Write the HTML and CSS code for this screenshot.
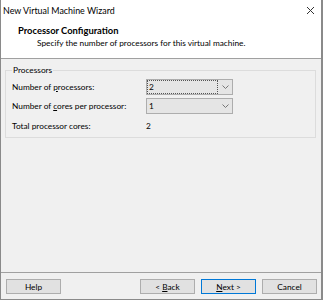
FILE: index.html
```html
<!DOCTYPE html>
<html lang="en">
<head>
  <meta charset="UTF-8" />
  <title>New Virtual Machine Wizard</title>
  <link rel="stylesheet" href="styles.css">
</head>
<body>

  <div class="window">

    <!-- Title bar -->
    <div class="titlebar">
      <span class="title">New Virtual Machine Wizard</span>
      <svg class="close" width="7" height="7" viewBox="0 0 7 7">
        <path d="M0 0 L7 7 M7 0 L0 7" stroke="#333" stroke-width="1" fill="none"/>
      </svg>
    </div>

    <!-- Page header -->
    <div class="header">
      <h1>Processor Configuration</h1>
      <p>Specify the number of processors for this virtual machine.</p>
    </div>

    <!-- Page content -->
    <div class="content">
      <fieldset class="group">
        <legend>Processors</legend>

        <div class="row">
          <span>Number of <u>p</u>rocessors:</span>
          <div class="combo">
            <span class="value focused">2</span>
            <svg class="arrow" width="7" height="4" viewBox="0 0 7 4">
              <path d="M0.5 0.5 L3.5 3.5 L6.5 0.5" stroke="#777" fill="none"/>
            </svg>
          </div>
        </div>

        <div class="row">
          <span>Number of <u>c</u>ores per processor:</span>
          <div class="combo">
            <span class="value">1</span>
            <svg class="arrow" width="7" height="4" viewBox="0 0 7 4">
              <path d="M0.5 0.5 L3.5 3.5 L6.5 0.5" stroke="#777" fill="none"/>
            </svg>
          </div>
        </div>

        <div class="row total">
          <span>Total processor cores:</span>
          <span class="count">2</span>
        </div>
      </fieldset>
    </div>

    <!-- Buttons -->
    <div class="footer">
      <button>Help</button>
      <div class="spacer"></div>
      <button>&lt; <u>B</u>ack</button>
      <button class="default"><u>N</u>ext &gt;</button>
      <button>Cancel</button>
    </div>

  </div>

</body>
</html>
```

FILE: styles.css
```css
/* General */
body {
  margin: 0;
  font-family: Lato, "Noto Sans", sans-serif;
  font-size: 8.3px;
  color: #000;
  background: #f0f0f0;
}

.window {
  width: 323px;
  height: 300px;
  box-sizing: border-box;
  display: flex;
  flex-direction: column;
  background: #f0f0f0;
  border-left: 1px solid #8a8a8a;
  border-right: 2px solid #8a8a8a;
  border-bottom: 1px solid #8a8a8a;
}

/* Title bar */
.titlebar {
  height: 21px;
  display: flex;
  align-items: center;
  justify-content: space-between;
  padding: 0 7px 0 2px;
  background: #fff;
}

.title {
  font-size: 8.9px;
}

/* Header */
.header {
  height: 38px;
  background: #fff;
  border-bottom: 1px solid #a0a0a0;
  box-sizing: border-box;
  padding: 4px 0 0 17px;
}

.header h1 {
  margin: 0;
  font-size: 9.4px;
  font-weight: bold;
  line-height: 12px;
}

.header p {
  margin: 0;
  padding-left: 19px;
  line-height: 12px;
}

/* Content */
.content {
  flex: 1;
  padding: 6px 5px 0 4px;
}

.group {
  margin: 0;
  padding: 2px 0 0 6px;
  height: 73px;
  box-sizing: border-box;
  border: 1px solid #dcdcdc;
}

.group legend {
  padding: 0 1px;
  line-height: 10px;
}

.row {
  display: grid;
  grid-template-columns: 134px 87px;
  align-items: center;
  height: 19px;
}

.row.total {
  height: 22px;
}

.combo {
  height: 16px;
  box-sizing: border-box;
  border: 1px solid #adadad;
  background: #e5e5e5;
  display: flex;
  align-items: center;
  padding: 0 3px 0 0;
}

.combo .value {
  flex: 1;
  line-height: 12px;
  padding-left: 1px;
  border: 1px solid transparent;
  margin-right: 4px;
}

.combo .value.focused {
  border: 1px dotted #555;
}

/* Footer */
.footer {
  height: 27px;
  box-sizing: border-box;
  border-top: 1px solid #a0a0a0;
  display: flex;
  align-items: flex-start;
  padding: 6px 4px 0 5px;
  gap: 6px;
}

.spacer {
  flex: 1;
}

button {
  width: 55px;
  height: 15px;
  padding: 0;
  font-family: inherit;
  font-size: 8.3px;
  line-height: 12px;
  color: #000;
  background: #e1e1e1;
  border: 1px solid #adadad;
}

button.default {
  border-color: #0078d7;
}
```
